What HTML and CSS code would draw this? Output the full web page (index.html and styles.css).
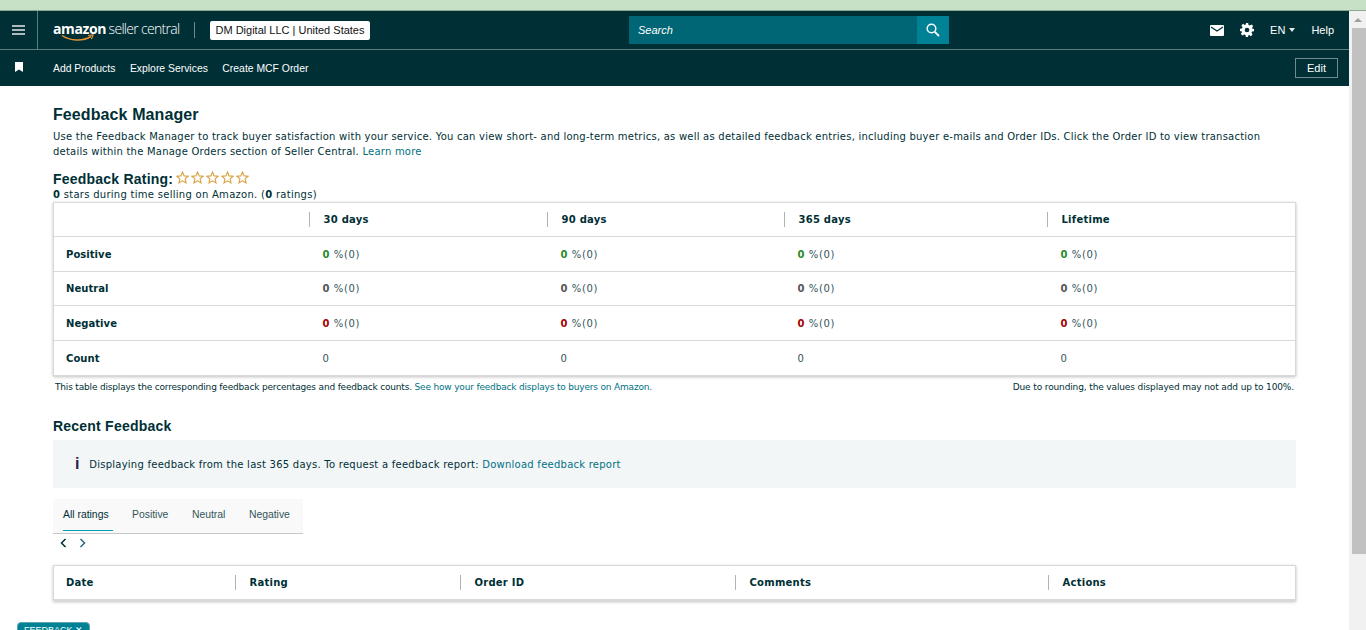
FILE: index.html
```html
<!DOCTYPE html>
<html lang="en">

<head>
  <meta charset="UTF-8">
  <meta name="viewport" content="width=device-width, initial-scale=1.0">
  <title>Feedback Manager - Seller Central</title>
  <link rel="stylesheet" href="styles.css">
</head>

<body>
  <div class="top-strip"></div>

  <div class="window">
    <div class="page">
      <header class="nav-main">
        <div class="menu-cell">
          <svg width="13" height="10" viewBox="0 0 13 10"><path d="M0 1h13M0 5h13M0 9h13" stroke="#fff" stroke-width="1.6" opacity="0.9"/></svg>
        </div>
        <div class="logo">
          <span class="logo-amazon">amazon</span>
          <span class="logo-seller">seller central</span>
          <svg class="logo-smile" width="34" height="8" viewBox="0 0 34 8"><path d="M1 1.500C9 7 22 7.500 30 2.500" fill="none" stroke="#e8912d" stroke-width="1.500"/><path d="M27 1.500l5-.5-1.500 4" fill="none" stroke="#e8912d" stroke-width="1.200"/></svg>
        </div>
        <div class="logo-divider"></div>
        <div class="account">DM Digital LLC | United States</div>
        <div class="search">
          <div class="search-input">Search</div>
          <div class="search-btn">
            <svg width="14" height="14" viewBox="0 0 14 14"><circle cx="5.500" cy="5.500" r="4.300" fill="none" stroke="#fff" stroke-width="1.500"/><path d="M8.800 8.800L13 13" stroke="#fff" stroke-width="1.800"/></svg>
          </div>
        </div>
        <div class="nav-right">
          <svg class="icon-mail" width="14" height="11" viewBox="0 0 14 11"><path d="M1 0h12a1 1 0 0 1 1 1v9a1 1 0 0 1-1 1H1a1 1 0 0 1-1-1V1a1 1 0 0 1 1-1z" fill="#fff"/><path d="M1 2l6 4 6-4" fill="none" stroke="#002f36" stroke-width="1.300"/></svg>
          <svg class="icon-gear" width="14" height="14" viewBox="0 0 24 24"><path fill="#fff" fill-rule="evenodd" d="M10 0h4l.6 3.300 2.300 1 2.800-1.900 2.900 2.900-1.900 2.800 1 2.300L24 10v4l-3.300.6-1 2.300 1.900 2.800-2.900 2.900-2.800-1.900-2.300 1L14 24h-4l-.6-3.300-2.300-1-2.800 1.900-2.900-2.900 1.900-2.800-1-2.300L0 14v-4l3.300-.6 1-2.300-1.900-2.800 2.900-2.900 2.800 1.900 2.300-1zM12 8a4 4 0 1 0 0 8 4 4 0 0 0 0-8z"/></svg>
          <span class="lang">EN</span>
          <span class="caret"></span>
          <span class="help">Help</span>
        </div>
      </header>

      <nav class="nav-sub">
        <svg class="icon-bookmark" width="8" height="10" viewBox="0 0 8 10"><path d="M0 0h8v10L4 7.500 0 10z" fill="#fff"/></svg>
        <a class="nav-link">Add Products</a>
        <a class="nav-link">Explore Services</a>
        <a class="nav-link">Create MCF Order</a>
        <button class="edit-btn">Edit</button>
      </nav>

      <main class="content">
        <h1>Feedback Manager</h1>
        <p class="intro">Use the Feedback Manager to track buyer satisfaction with your service. You can view short- and long-term metrics, as well as detailed feedback entries, including buyer e-mails and Order IDs. Click the Order ID to view transaction details within the Manage Orders section of Seller Central. <a>Learn more</a></p>

        <div class="rating-title">
          <h2>Feedback Rating:</h2>
          <div class="stars">
            <svg width="13" height="13" viewBox="0 0 24 24"><path class="star" d="M12 2l3 7 7.500.7-5.700 5 1.700 7.300L12 18.200 5.500 22l1.700-7.300-5.700-5L9 9z"/></svg>
            <svg width="13" height="13" viewBox="0 0 24 24"><path class="star" d="M12 2l3 7 7.500.7-5.700 5 1.700 7.300L12 18.200 5.500 22l1.700-7.300-5.700-5L9 9z"/></svg>
            <svg width="13" height="13" viewBox="0 0 24 24"><path class="star" d="M12 2l3 7 7.500.7-5.700 5 1.700 7.300L12 18.200 5.500 22l1.700-7.300-5.700-5L9 9z"/></svg>
            <svg width="13" height="13" viewBox="0 0 24 24"><path class="star" d="M12 2l3 7 7.500.7-5.700 5 1.700 7.300L12 18.200 5.500 22l1.700-7.300-5.700-5L9 9z"/></svg>
            <svg width="13" height="13" viewBox="0 0 24 24"><path class="star" d="M12 2l3 7 7.500.7-5.700 5 1.700 7.300L12 18.200 5.500 22l1.700-7.300-5.700-5L9 9z"/></svg>
          </div>
        </div>
        <p class="rating-sub"><b>0</b> stars during time selling on Amazon. (<b>0</b> ratings)</p>

        <table class="data-table metrics">
          <thead>
            <tr>
              <th class="col-label"></th>
              <th class="col-a"><span class="th-text">30 days</span></th>
              <th class="col-b"><span class="th-text">90 days</span></th>
              <th class="col-c"><span class="th-text">365 days</span></th>
              <th><span class="th-text">Lifetime</span></th>
            </tr>
          </thead>
          <tbody>
            <tr>
              <td class="row-label">Positive</td>
              <td><b class="pos">0</b> %(0)</td>
              <td><b class="pos">0</b> %(0)</td>
              <td><b class="pos">0</b> %(0)</td>
              <td><b class="pos">0</b> %(0)</td>
            </tr>
            <tr>
              <td class="row-label">Neutral</td>
              <td><b class="neu">0</b> %(0)</td>
              <td><b class="neu">0</b> %(0)</td>
              <td><b class="neu">0</b> %(0)</td>
              <td><b class="neu">0</b> %(0)</td>
            </tr>
            <tr>
              <td class="row-label">Negative</td>
              <td><b class="neg">0</b> %(0)</td>
              <td><b class="neg">0</b> %(0)</td>
              <td><b class="neg">0</b> %(0)</td>
              <td><b class="neg">0</b> %(0)</td>
            </tr>
            <tr>
              <td class="row-label">Count</td>
              <td>0</td>
              <td>0</td>
              <td>0</td>
              <td>0</td>
            </tr>
          </tbody>
        </table>

        <div class="table-note">
          <span class="note-left">This table displays the corresponding feedback percentages and feedback counts. <a>See how your feedback displays to buyers on Amazon.</a></span>
          <span class="note-right">Due to rounding, the values displayed may not add up to 100%.</span>
        </div>

        <h2 class="recent-title">Recent Feedback</h2>
        <div class="info-box">
          <span class="info-icon">i</span>
          <span>Displaying feedback from the last 365 days. To request a feedback report: <a>Download feedback report</a></span>
        </div>

        <div class="tabs">
          <div class="tab active">All ratings</div>
          <div class="tab">Positive</div>
          <div class="tab">Neutral</div>
          <div class="tab">Negative</div>
        </div>
        <div class="tab-arrows">
          <svg width="7" height="10" viewBox="0 0 7 10"><path d="M5.500 1L1.500 5l4 4" fill="none" stroke="#002f36" stroke-width="1.500"/></svg>
          <svg width="7" height="10" viewBox="0 0 7 10"><path d="M1.500 1l4 4-4 4" fill="none" stroke="#2a6a7a" stroke-width="1.500"/></svg>
        </div>

        <table class="data-table recent">
          <thead>
            <tr>
              <th class="col-date">Date</th>
              <th class="col-rating"><span class="th-text">Rating</span></th>
              <th class="col-order"><span class="th-text">Order ID</span></th>
              <th class="col-comments"><span class="th-text">Comments</span></th>
              <th><span class="th-text">Actions</span></th>
            </tr>
          </thead>
        </table>
      </main>
    </div>

    <div class="scrollbar">
      <div class="scroll-up"></div>
      <div class="scroll-thumb"></div>
    </div>
  </div>

  <div class="feedback-btn">FEEDBACK &#x2715;</div>
</body>

</html>
```

FILE: styles.css
```css
* {
  box-sizing: border-box;
}

html,
body {
  height: 100%;
}

body {
  margin: 0;
  overflow: hidden;
  display: flex;
  flex-direction: column;
  font-family: "DejaVu Sans", Verdana, sans-serif;
  font-size: 10px;
  color: #002f36;
  background: #fff;
}

a {
  color: #007185;
}

.top-strip {
  height: 11px;
  flex: none;
  background: #c7e1c6;
  border-bottom: 1px solid #8fa58f;
}

.window {
  flex: 1;
  display: flex;
  min-height: 0;
}

.page {
  flex: 1;
  min-width: 0;
}

/* top nav */
.nav-main {
  height: 39px;
  display: flex;
  align-items: center;
  background: #002f36;
  border-bottom: 1px solid #5d7a7d;
  font-family: "Liberation Sans", Arial, sans-serif;
  color: #fff;
}

.menu-cell {
  width: 38px;
  height: 38px;
  flex: none;
  display: flex;
  align-items: center;
  justify-content: center;
  border-right: 1px solid #5d7a7d;
}

.logo {
  position: relative;
  width: 127px;
  margin-left: 15px;
  margin-top: -3px;
  flex: none;
  white-space: nowrap;
  font-family: "Open Sans", sans-serif;
}

.logo-amazon {
  font-size: 14px;
  font-weight: 700;
  letter-spacing: -0.4px;
}

.logo-seller {
  font-size: 14px;
  font-weight: 300;
  letter-spacing: -0.7px;
}

.logo-smile {
  position: absolute;
  left: 8px;
  top: 15px;
}

.logo-divider {
  width: 1px;
  height: 16px;
  margin-left: 14px;
  background: #6f8a8d;
}

.account {
  height: 19px;
  margin-left: 15px;
  padding: 0 5.500px;
  background: #fff;
  border-radius: 2px;
  color: #111;
  font-size: 11px;
  line-height: 19px;
  white-space: nowrap;
}

.search {
  display: flex;
  height: 28px;
  margin-left: 259px;
}

.search-input {
  width: 288px;
  padding-left: 9px;
  background: #006574;
  font-size: 11px;
  font-style: italic;
  line-height: 28px;
}

.search-btn {
  width: 32px;
  display: flex;
  align-items: center;
  justify-content: center;
  background: #008296;
}

.nav-right {
  margin-left: auto;
  display: flex;
  align-items: center;
  font-size: 11px;
}

.icon-mail {
  margin-right: 16px;
}

.icon-gear {
  margin-right: 16px;
}

.caret {
  margin-left: 4px;
  border-left: 3.500px solid transparent;
  border-right: 3.500px solid transparent;
  border-top: 4px solid #e4eaea;
}

.help {
  margin-left: 16px;
  margin-right: 15px;
}

/* shortcuts bar */
.nav-sub {
  height: 36px;
  display: flex;
  align-items: center;
  padding-left: 15px;
  padding-right: 11px;
  background: #002f36;
  font-family: "Liberation Sans", Arial, sans-serif;
  font-size: 10.400px;
  color: #fff;
}

.icon-bookmark {
  margin-right: 16px;
  margin-top: -2px;
}

.icon-bookmark + .nav-link {
  margin-left: 14px;
}

.nav-link {
  margin-left: 14.500px;
  color: #fff;
}

.edit-btn {
  margin-left: auto;
  width: 43px;
  height: 20px;
  padding: 0;
  background: transparent;
  border: 1px solid #6f8a8d;
  color: #fff;
  font-family: inherit;
  font-size: 11px;
}

/* main content */
.content {
  padding: 19px 53px 0;
}

h1 {
  margin: 0;
  font-family: "Liberation Sans", Arial, sans-serif;
  font-size: 16px;
  font-weight: 700;
  line-height: 20px;
  color: #002f36;
  letter-spacing: 0.1px;
}

.intro {
  margin: 4px 0 0;
  line-height: 15px;
  letter-spacing: 0.23px;
}

.rating-title {
  display: flex;
  align-items: center;
  margin-top: 11px;
  height: 18px;
}

h2 {
  margin: 0;
  font-family: "Liberation Sans", Arial, sans-serif;
  font-size: 14px;
  font-weight: 700;
  color: #002f36;
  letter-spacing: 0.22px;
}

.stars {
  display: flex;
  gap: 2px;
  margin-left: 3px;
  margin-top: -4px;
}

.star {
  fill: none;
  stroke: #d9a03f;
  stroke-width: 2;
}

.rating-sub {
  margin: 1px 0 0;
  line-height: 12px;
  letter-spacing: 0.28px;
}

.data-table {
  width: 1243px;
  table-layout: fixed;
  border-collapse: collapse;
  background: #fff;
  border: 1px solid #d5dbdb;
  box-shadow: 0 1px 3px rgba(0, 0, 0, 0.25);
}

.metrics {
  margin-top: 1px;
}

th {
  height: 34px;
  padding: 0;
  text-align: left;
  font-size: 10px;
  font-weight: 700;
  letter-spacing: 0.25px;
}

.th-text {
  display: block;
  height: 15px;
  padding-left: 14px;
  border-left: 1px solid #a9b5b6;
  line-height: 15px;
}

td {
  height: 35px;
  padding: 1px 0 0 14px;
  border-top: 1px solid #d5dbdb;
  letter-spacing: 0.6px;
  color: #33555a;
}

tr:nth-child(2) td {
  height: 34px;
  padding-top: 0;
}

tr:last-child td {
  padding-top: 0;
}

.row-label {
  padding-left: 12px;
  font-weight: 700;
  color: #002f36;
  letter-spacing: 0.05px;
}

.col-label {
  width: 255px;
}

.col-a {
  width: 238px;
}

.col-b {
  width: 237px;
}

.col-c {
  width: 263px;
}

.pos {
  color: #2a8a2a;
}

.neu {
  color: #555;
}

.neg {
  color: #a30000;
}

.table-note {
  display: flex;
  justify-content: space-between;
  margin-top: 4px;
  padding: 0 2px;
  font-size: 9px;
  line-height: 14px;
}

.note-left {
  letter-spacing: -0.18px;
}

.note-right {
  letter-spacing: -0.13px;
}

.recent-title {
  margin-top: 24px;
  line-height: 16px;
}

.info-box {
  display: flex;
  align-items: center;
  height: 48px;
  margin-top: 6px;
  width: 1243px;
  padding-left: 22px;
  background: #f3f6f7;
  letter-spacing: 0.25px;
}

.info-icon {
  margin-right: 9.500px;
  font-family: "Liberation Sans", Arial, sans-serif;
  font-size: 16px;
  font-weight: 700;
  color: #2d1f3a;
}

.tabs {
  display: flex;
  width: 250px;
  height: 35px;
  margin-top: 11px;
  padding-left: 10px;
  background: #f9f9f9;
  border-bottom: 1px solid #c4c8c8;
  font-family: "Liberation Sans", Arial, sans-serif;
  font-size: 10.400px;
}

.tab {
  flex: none;
  margin-right: 23.500px;
  padding-top: 10px;
  color: #33555a;
}

.tab.active {
  width: 50px;
  margin-right: 19px;
  height: 32px;
  color: #002f36;
  border-bottom: 1px solid #00a0b4;
}

.tab-arrows {
  display: flex;
  gap: 12px;
  height: 20px;
  padding: 4px 0 0 7px;
}

.recent {
  margin-top: 11px;
  border-bottom: 2px solid #d5dbdb;
}

.col-date {
  width: 181px;
  padding-left: 12px;
}

.col-rating {
  width: 225px;
}

.col-order {
  width: 275px;
}

.col-comments {
  width: 313px;
}

/* fake page scrollbar */
.scrollbar {
  width: 17px;
  flex: none;
  background: #f1f1f1;
  display: flex;
  flex-direction: column;
  align-items: center;
}

.scroll-up {
  width: 0;
  height: 0;
  margin: 7px 0 6px;
  border-left: 4px solid transparent;
  border-right: 4px solid transparent;
  border-bottom: 4px solid #a0a0a0;
}

.scroll-thumb {
  width: 14px;
  height: 526px;
  margin-left: 2px;
  background: #c1c1c1;
}

.feedback-btn {
  position: fixed;
  left: 17px;
  top: 622px;
  width: 73px;
  height: 20px;
  padding-top: 2px;
  background: #008296;
  border: 1px solid #5aa5b0;
  border-radius: 4px;
  color: #fff;
  font-family: "Liberation Sans", Arial, sans-serif;
  font-size: 9px;
  line-height: 11px;
  text-align: center;
}
```
